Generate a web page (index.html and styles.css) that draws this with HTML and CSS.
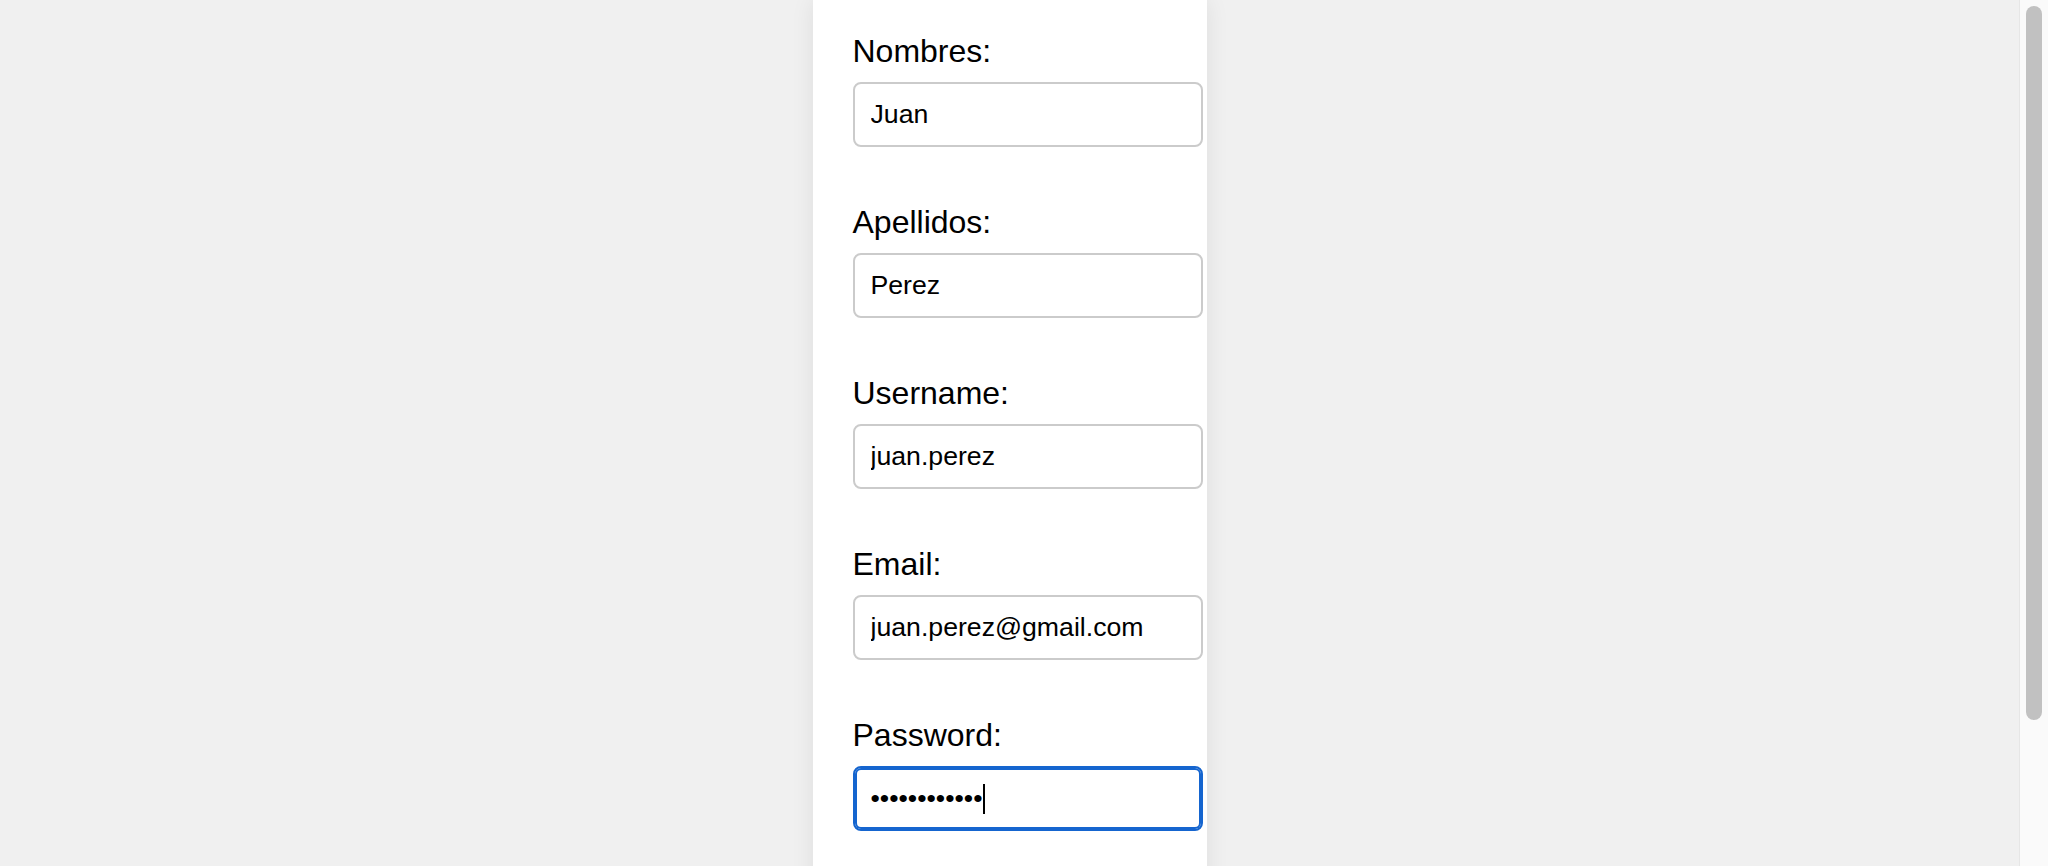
FILE: index.html
```html
<!DOCTYPE html>
<html lang="es">
<head>
  <meta charset="UTF-8">
  <meta name="viewport" content="width=device-width, initial-scale=1.0">
  <title>Registro</title>
  <link rel="stylesheet" href="styles.css">
</head>
<body>
  <main class="page">
    <form class="register-card">
      <div class="form-group">
        <label class="form-label" for="nombres">Nombres:</label>
        <input class="form-input" type="text" id="nombres" value="Juan">
      </div>

      <div class="form-group">
        <label class="form-label" for="apellidos">Apellidos:</label>
        <input class="form-input" type="text" id="apellidos" value="Perez">
      </div>

      <div class="form-group">
        <label class="form-label" for="username">Username:</label>
        <input class="form-input" type="text" id="username" value="juan.perez">
      </div>

      <div class="form-group">
        <label class="form-label" for="email">Email:</label>
        <input class="form-input" type="email" id="email" value="juan.perez@gmail.com">
      </div>

      <div class="form-group">
        <label class="form-label" for="password">Password:</label>
        <div class="input-wrap">
          <input class="form-input is-focused" type="password" id="password" value="secretpass12">
          <span class="text-caret"></span>
        </div>
      </div>
    </form>
  </main>

  <!-- window scrollbar -->
  <div class="scrollbar">
    <div class="scrollbar-thumb"></div>
  </div>
</body>
</html>
```

FILE: styles.css
```css
* {
  box-sizing: border-box;
}

html,
body {
  height: 100%;
  overflow: hidden;
}

body {
  margin: 0;
  display: flex;
  background-color: #f0f0f0;
  font-family: "Liberation Sans", Arial, Helvetica, sans-serif;
  color: #000;
}

.page {
  flex: 1;
  display: flex;
  justify-content: center;
  align-items: flex-start;
  overflow: hidden;
}

.scrollbar {
  width: 29px;
  flex-shrink: 0;
  padding: 6px 6px 6px 7px;
  background-color: #fafafa;
  border-left: 1px solid #e6e6e6;
}

.scrollbar-thumb {
  width: 16px;
  height: 714px;
  margin-left: -1px;
  background-color: #c1c1c1;
  border-radius: 8px;
}

.register-card {
  width: 394px;
  min-height: 1036px;
  flex-shrink: 0;
  padding: 33px 40px 40px;
  background-color: #fff;
  box-shadow: 0 0 22px rgba(0, 0, 0, 0.08);
}

.form-group {
  margin-bottom: 57px;
}

.form-label {
  display: block;
  margin-bottom: 12px;
  font-size: 32px;
}

.form-input {
  display: block;
  box-sizing: content-box;
  width: 100%;
  margin: 0;
  padding: 15px 16px;
  font-family: inherit;
  font-size: 26.667px;
  color: #000;
  background-color: #fff;
  border: 2px solid #cbcbcb;
  border-radius: 8px;
  outline: none;
}

.form-input.is-focused {
  border-color: #1565cf;
  box-shadow: inset 0 0 0 2px #1565cf;
}

.input-wrap {
  position: relative;
}

.text-caret {
  position: absolute;
  left: 130px;
  top: 18px;
  width: 2px;
  height: 30px;
  background-color: #000;
}
```
